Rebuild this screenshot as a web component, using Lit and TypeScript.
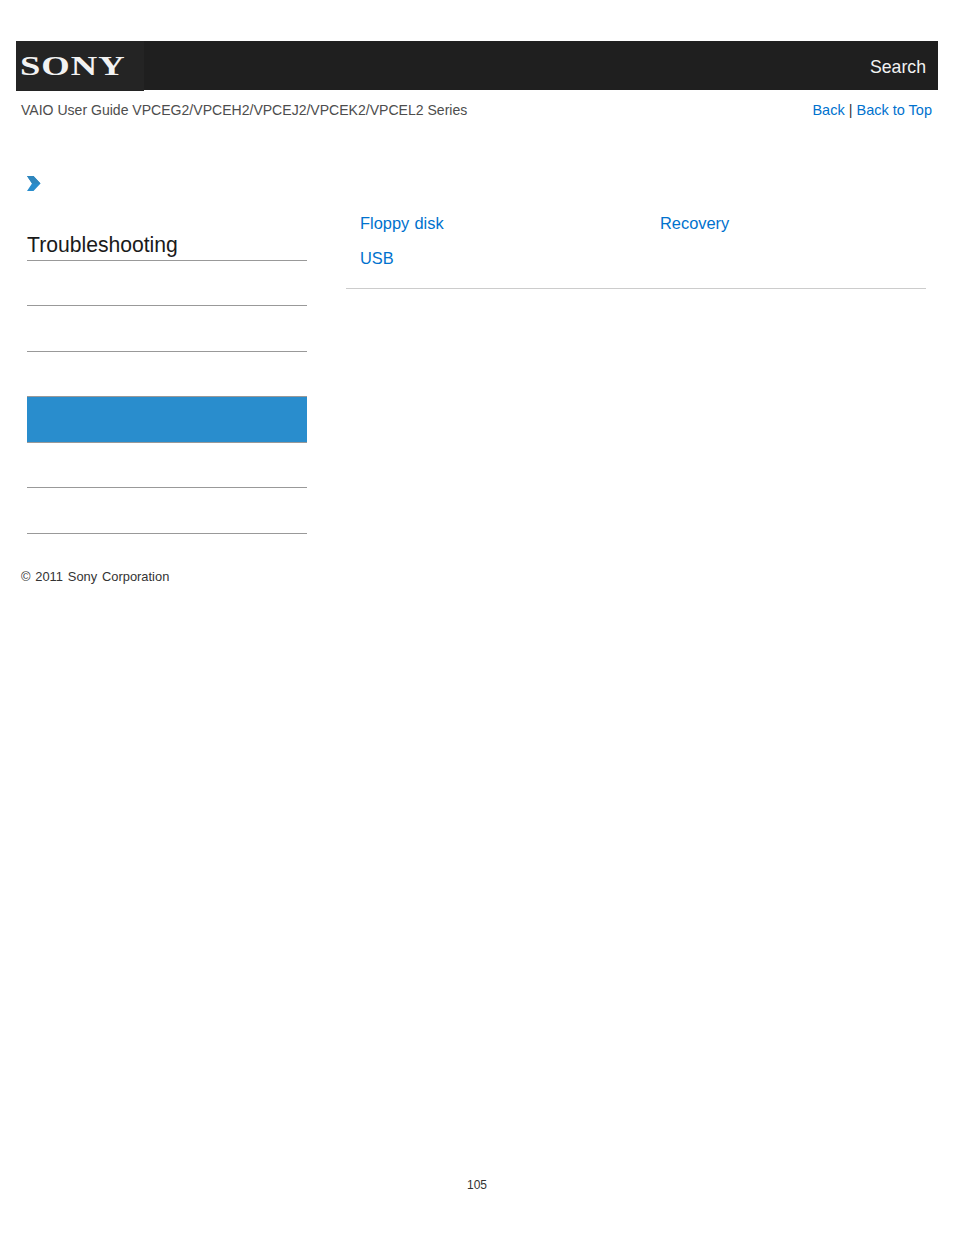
import { LitElement, html, css } from "lit";
import { customElement } from "lit/decorators.js";

@customElement("app-root")
export class AppRoot extends LitElement {
  static styles = css`
    :host { display: block; height: 1235px; background: #fff; font-family: "Liberation Sans", Arial, sans-serif; position: relative; overflow: hidden; }
    a { color: #0072ce; text-decoration: none; }
    .header { margin: 41px 16px 0 16px; height: 49px; background: #1f1f1f; display: flex; justify-content: space-between; align-items: flex-start; }
    .logo { width: 128px; height: 50px; background: #242424; display: flex; align-items: center; box-sizing: border-box; padding-left: 4px; }
    .logo span { font-family: "Liberation Serif", serif; font-weight: 700; font-size: 30px; line-height: 50px; color: #f2f2f2; letter-spacing: 0.8px; display: inline-block; transform: scale(1.22, 0.9); transform-origin: left center; }
    .search { color: #f2f2f2; font-size: 17.7px; line-height: 20px; margin: 16px 12px 0 0; }
    .guide { margin: 12px 22px 0 21px; height: 16px; display: flex; justify-content: space-between; font-size: 14.06px; line-height: 16px; color: #4d4d4d; }
    .links { font-size: 14.5px; }
    .guide .sep { color: #333; }
    .main { display: flex; margin: 57px 28px 0 27px; }
    .side { width: 280px; flex: none; }
    .chev { display: block; width: 14px; height: 16px; margin-bottom: 40.5px; }
    .title { font-size: 21.15px; line-height: 26px; color: #1a1a1a; height: 28px; border-bottom: 1px solid #999; box-sizing: content-box; }
    .row { height: 44.5px; border-bottom: 1px solid #999; }
    .row.active { background: #298dcd; }
    .content { margin: 38px 0 0 39px; width: 580px; height: 76px; box-sizing: border-box; border-bottom: 1px solid #ccc; padding: 0 0 0 14px; display: grid; grid-template-columns: 300px 1fr; grid-auto-rows: 35px; font-size: 16.4px; line-height: 20px; word-spacing: 0.7px; align-content: start; }
    .copy { margin: 35px 0 0 21px; font-size: 12.9px; line-height: 16px; color: #333; word-spacing: 1.2px; }
    .page { position: absolute; left: 0; right: 0; top: 1178px; text-align: center; font-size: 12px; line-height: 14px; color: #333; }
  `;

  render() {
    return html`
      <div class="header">
        <div class="logo"><span>SONY</span></div>
        <div class="search">Search</div>
      </div>
      <div class="guide">
        <div>VAIO User Guide VPCEG2/VPCEH2/VPCEJ2/VPCEK2/VPCEL2 Series</div>
        <div class="links"><a href="#">Back</a> <span class="sep">|</span> <a href="#">Back to Top</a></div>
      </div>
      <div class="main">
        <div class="side">
          <svg class="chev" viewBox="0 0 14 16"><path d="M0 1H6.5L13.5 8.5L6.5 16H0L5 8.5Z" fill="#298dcd"/><path d="M0 1H6.5L13.5 8.5H5Z" fill="#2f86bd"/></svg>
          <div class="title">Troubleshooting</div>
          <div class="row"></div>
          <div class="row"></div>
          <div class="row"></div>
          <div class="row active"></div>
          <div class="row"></div>
          <div class="row"></div>
        </div>
        <div class="content">
          <a href="#">Floppy disk</a><a href="#">Recovery</a>
          <a href="#">USB</a>
        </div>
      </div>
      <div class="copy">© 2011 Sony Corporation</div>
      <div class="page">105</div>
    `;
  }
}
